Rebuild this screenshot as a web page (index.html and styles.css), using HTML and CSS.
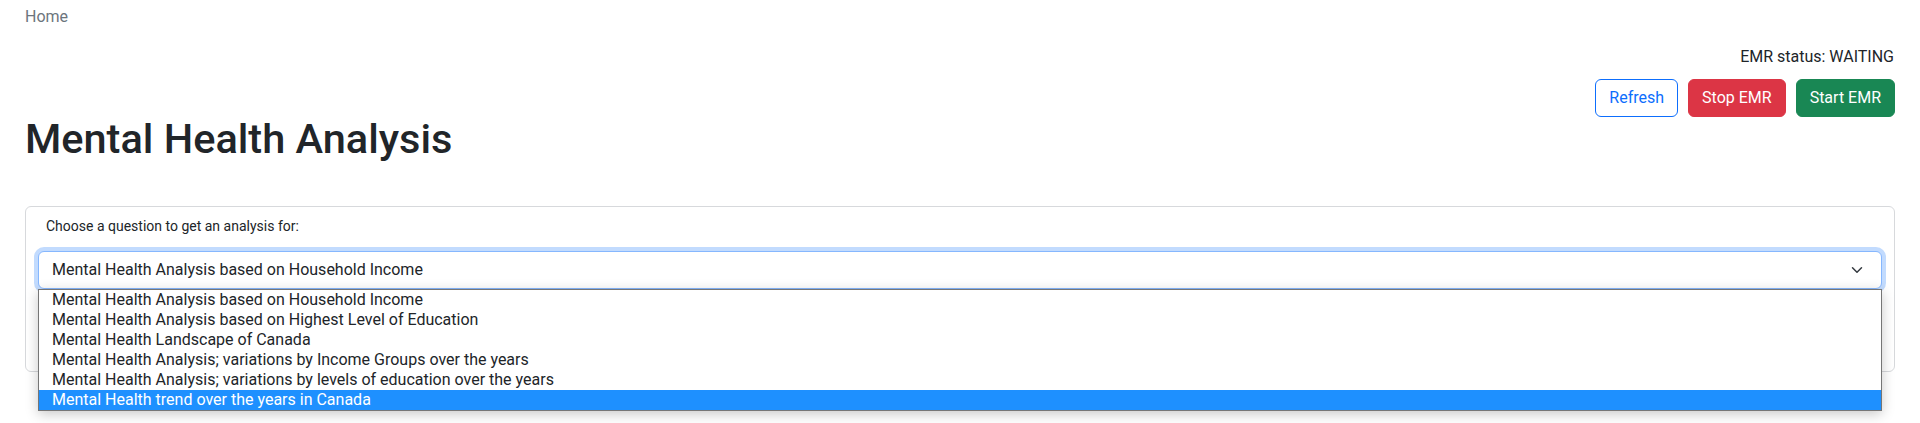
FILE: index.html
```html
<!DOCTYPE html>
<html lang="en">
<head>
<meta charset="utf-8">
<title>Mental Health Analysis</title>
<link rel="stylesheet" href="styles.css">
</head>
<body>
<div class="page">
  <nav class="crumbs"><span class="crumb">Home</span></nav>
  <div class="status">EMR status: WAITING</div>
  <div class="actions">
    <button class="btn btn-outline">Refresh</button>
    <button class="btn btn-danger">Stop EMR</button>
    <button class="btn btn-success">Start EMR</button>
  </div>
  <h1 class="title">Mental Health Analysis</h1>
  <section class="card">
    <div class="card-body">
      <label class="label">Choose a question to get an analysis for:</label>
      <div class="select-wrap">
        <div class="select">
          <span>Mental Health Analysis based on Household Income</span>
          <svg class="chev" width="16" height="12" viewBox="0 0 16 16"><path d="m2 5 6 6 6-6" fill="none" stroke="#343a40" stroke-width="2" stroke-linecap="round" stroke-linejoin="round"/></svg>
        </div>
        <ul class="dropdown">
          <li class="opt">Mental Health Analysis based on Household Income</li>
          <li class="opt">Mental Health Analysis based on Highest Level of Education</li>
          <li class="opt">Mental Health Landscape of Canada</li>
          <li class="opt">Mental Health Analysis; variations by Income Groups over the years</li>
          <li class="opt">Mental Health Analysis; variations by levels of education over the years</li>
          <li class="opt opt-active">Mental Health trend over the years in Canada</li>
        </ul>
      </div>
    </div>
  </section>
</div>
</body>
</html>
```
FILE: styles.css
```css
* { box-sizing: border-box; }
html, body { margin: 0; padding: 0; background: #fff; }
body {
  font-family: Roboto, "Liberation Sans", sans-serif;
  font-size: 16px;
  line-height: 24px;
  color: #212529;
  min-height: 423px;
}
.page { padding: 0 25px 60px; }
.crumbs { padding-top: 5px; height: 29px; }
.crumb { color: #6c757d; }
.status { margin-top: 16px; text-align: right; padding-right: 1px; }
.actions {
  margin-top: 10px;
  display: flex;
  justify-content: flex-end;
  gap: 10px;
}
.btn {
  font-family: inherit;
  font-size: 16px;
  line-height: 24px;
  padding: 6px 13px;
  border: 1px solid transparent;
  border-radius: 6px;
  background: transparent;
  cursor: pointer;
}
.btn-outline { color: #0d6efd; border-color: #0d6efd; background: #fff; }
.btn-danger { color: #fff; background: #dc3545; border-color: #dc3545; }
.btn-success { color: #fff; background: #198754; border-color: #198754; }
.title {
  margin: 0;
  font-size: 41.5px;
  line-height: 44px;
  font-weight: 500;
}
.card {
  margin-top: 45px;
  border: 1px solid #d7d9dc;
  border-radius: 6px;
  background: #fff;
}
.card-body { padding: 9px 12px 82px; }
.label {
  display: block;
  font-size: 14px;
  line-height: 20px;
  padding-left: 8px;
}
.select-wrap { position: relative; margin-top: 15px; }
.select {
  height: 38px;
  display: flex;
  align-items: center;
  justify-content: space-between;
  padding: 0 12px 0 13px;
  border: 1px solid #86b7fe;
  border-radius: 6px;
  box-shadow: 0 0 0 4px rgba(13, 110, 253, 0.25);
  background: #fff;
}
.chev { margin-right: 4px; }
.dropdown {
  position: absolute;
  top: 100%;
  left: 0;
  right: 0;
  margin: 0;
  padding: 0;
  list-style: none;
  background: #fff;
  border: 1px solid #767676;
  box-shadow: 0 3px 12px rgba(0, 0, 0, 0.22);
  z-index: 5;
}
.opt {
  height: 20px;
  line-height: 20px;
  padding-left: 13px;
  white-space: nowrap;
}
.opt-active { background: #1e90ff; color: #fff; }
```
